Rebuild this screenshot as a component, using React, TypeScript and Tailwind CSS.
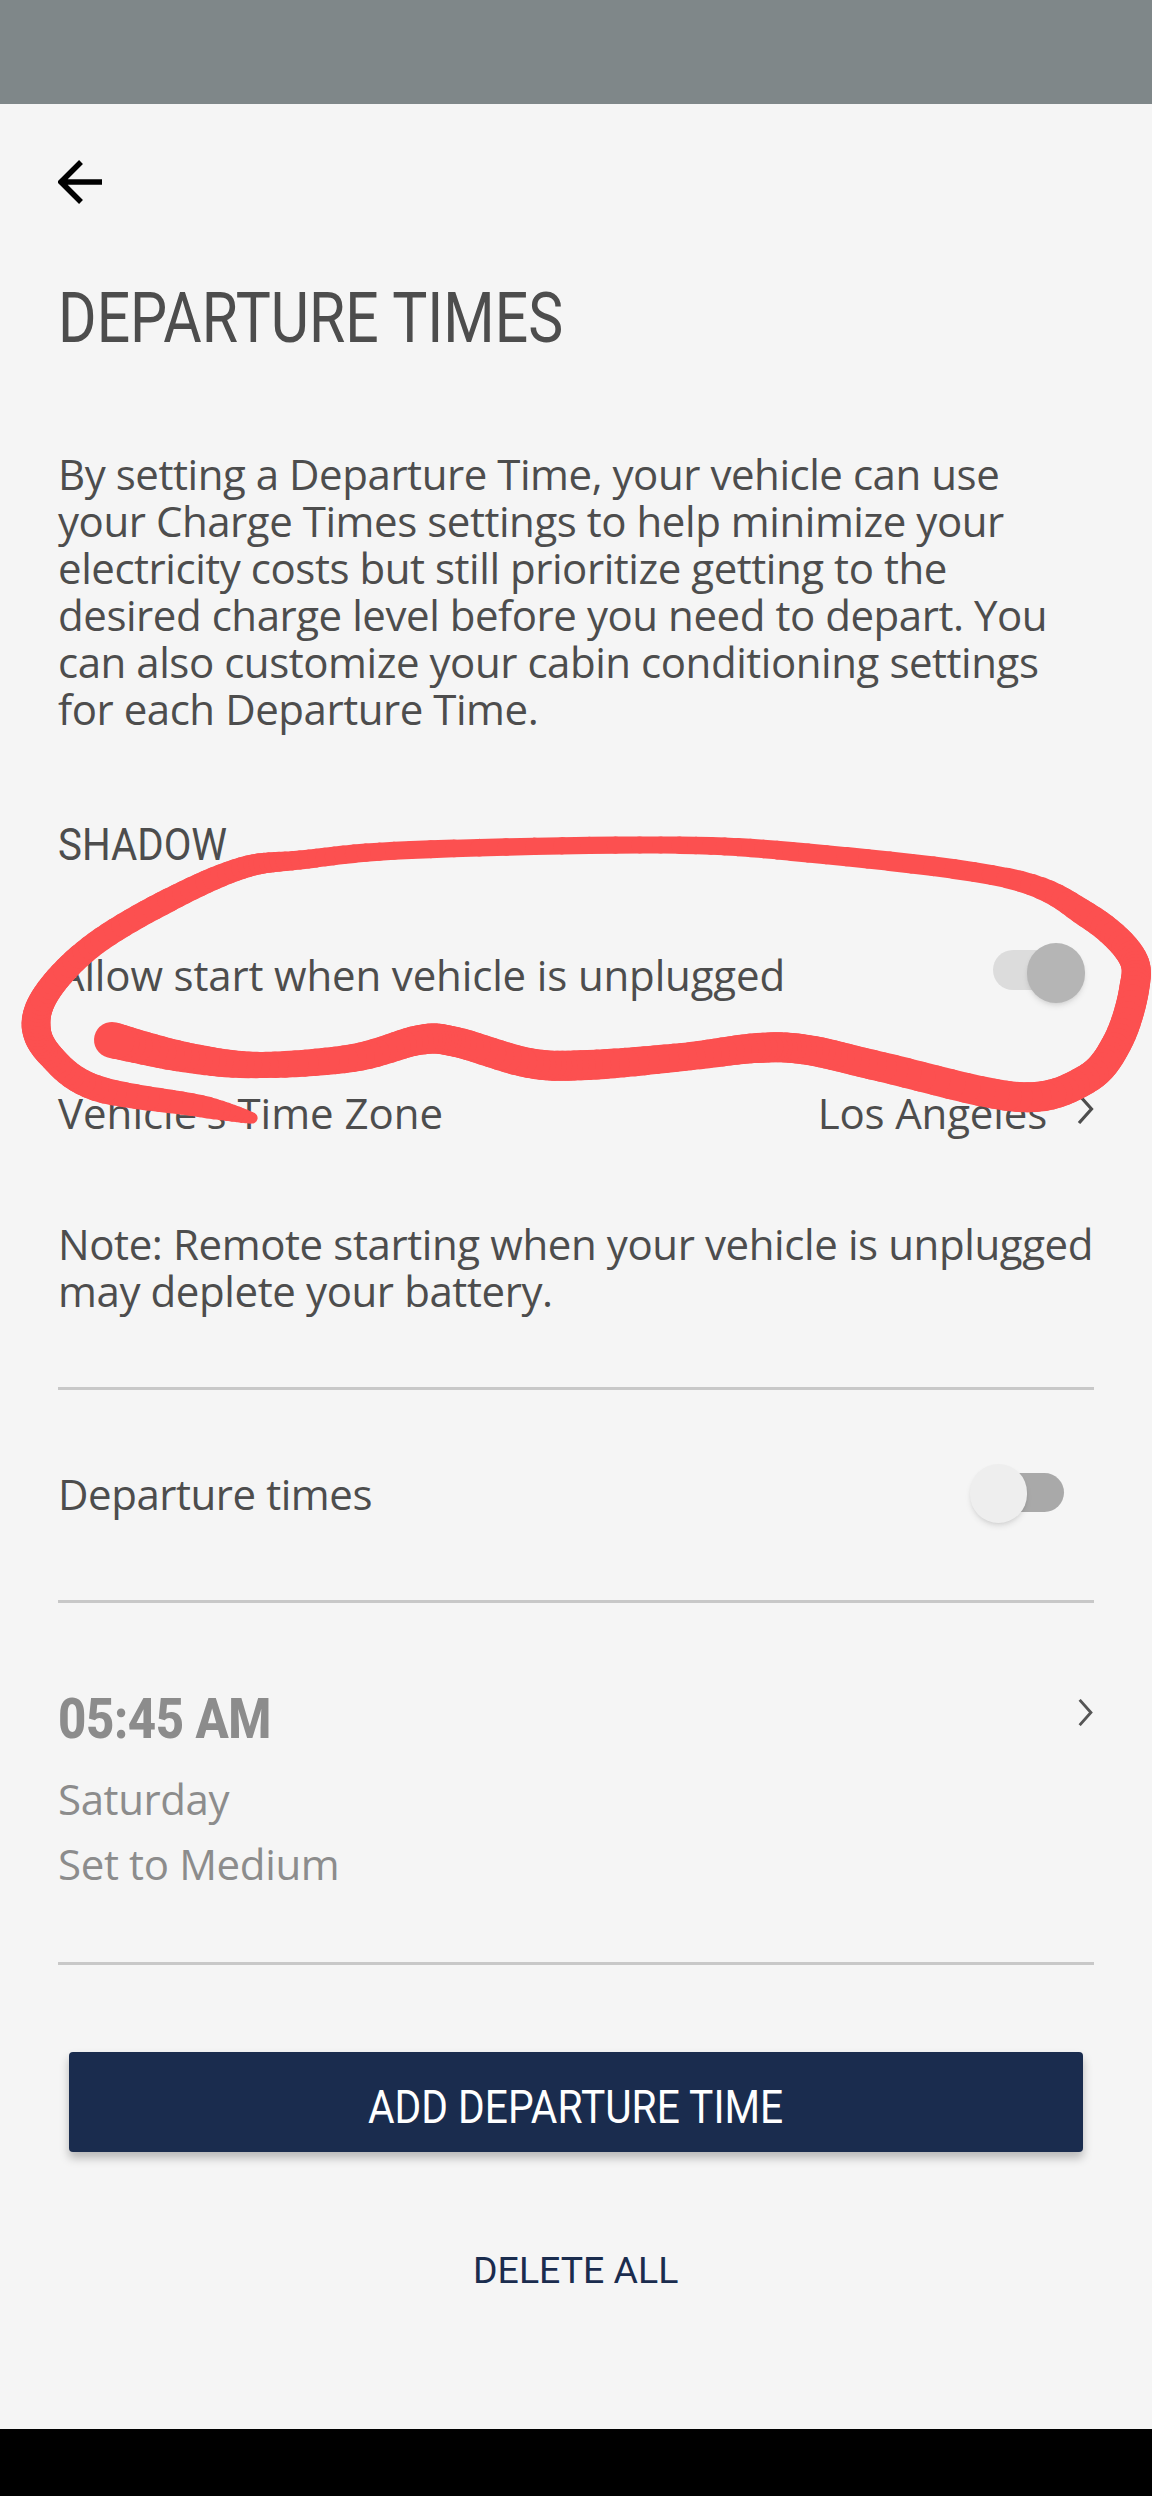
// x, y, stroke width along the marker line, from the tail under "Time Zone" round to the blob on the left
const scribble = [
  [252, 1118, 10], [200, 1106, 22], [96, 1088, 26], [50, 1055, 26], [36, 1023, 29], [51, 987, 26],
  [96, 943, 24], [169, 900, 24], [242, 868, 22], [300, 860, 19], [411, 850, 18], [661, 845, 17],
  [808, 853, 19], [1007, 878, 20], [1087, 915, 26], [1131, 955, 28], [1134, 990, 30], [1117, 1043, 30],
  [1085, 1080, 30], [1018, 1097, 30], [882, 1067, 30], [808, 1050, 30], [757, 1048, 30], [683, 1057, 28],
  [588, 1065, 30], [529, 1063, 30], [456, 1042, 30], [419, 1040, 30], [353, 1058, 28], [257, 1065, 26],
  [184, 1057, 30], [112, 1040, 36],
];

function sampleScribble() {
  const out: number[][] = [];
  for (let i = 0; i < scribble.length - 1; i++) {
    const p0 = scribble[Math.max(i - 1, 0)];
    const p1 = scribble[i];
    const p2 = scribble[i + 1];
    const p3 = scribble[Math.min(i + 2, scribble.length - 1)];
    for (let s = 0; s < 10; s++) {
      const t = s / 10;
      const cr = (k: number) =>
        0.5 * (2 * p1[k] + (p2[k] - p0[k]) * t + (2 * p0[k] - 5 * p1[k] + 4 * p2[k] - p3[k]) * t * t + (3 * p1[k] - p0[k] - 3 * p2[k] + p3[k]) * t * t * t);
      out.push([cr(0), cr(1), p1[2] + (p2[2] - p1[2]) * t]);
    }
  }
  out.push(scribble[scribble.length - 1]);
  return out;
}

function Chevron({ className }: { className: string }) {
  return (
    <svg className={className} viewBox="0 0 17 30" fill="none" stroke="currentColor" strokeWidth={3.2}>
      <path d="M2 1 L14.5 15 L2 29" />
    </svg>
  );
}

function Toggle({ on }: { on: boolean }) {
  return on ? (
    <div className="relative w-[92px] h-[62px]">
      <div className="absolute left-0 top-[7px] w-[70px] h-[40px] rounded-full bg-[#dcdcdc]" />
      <div className="absolute right-0 top-0 w-[58px] h-[60px] rounded-full bg-[#b5b5b5] shadow-md" />
    </div>
  ) : (
    <div className="relative w-[94px] h-[62px]">
      <div className="absolute right-0 top-[9px] w-[70px] h-[39px] rounded-full bg-[#a9a9a9]" />
      <div className="absolute left-0 top-0 w-[57px] h-[59px] rounded-full bg-[#eeeeee] shadow-md" />
    </div>
  );
}

export default function App() {
  const samples = sampleScribble();
  return (
    <div className="relative w-[1152px] h-[2496px] overflow-hidden flex flex-col bg-[#f5f5f5] font-['Open_Sans',sans-serif] text-[#4d4d4d]">
      <div className="h-[104px] shrink-0 bg-[#7f8789]" />

      <div className="flex-1 px-[58px]">
        <svg className="block mt-[56px] w-[44px] h-[44px] text-black" viewBox="0 0 44 44" fill="none" stroke="currentColor" strokeWidth={5.5}>
          <path d="M23 2 L3 22 L23 42 M3 22 H44" />
        </svg>

        <h1 className="mt-[74px] h-[80px] leading-[80px] text-[70px] font-['Roboto',sans-serif] font-normal whitespace-nowrap origin-left scale-x-[0.841]">
          DEPARTURE TIMES
        </h1>

        <p className="mt-[92px] text-[42px] leading-[47px] tracking-[-0.45px] whitespace-nowrap">
          By setting a Departure Time, your vehicle can use<br />
          your Charge Times settings to help minimize your<br />
          electricity costs but still prioritize getting to the<br />
          desired charge level before you need to depart. You<br />
          can also customize your cabin conditioning settings<br />
          for each Departure Time.
        </p>

        <h2 className="mt-[88px] text-[44px] leading-[50px] font-['Roboto',sans-serif] font-normal origin-left scale-x-[0.915] whitespace-nowrap">SHADOW</h2>

        <div className="mt-[73px] flex items-center justify-between h-[62px] pr-[9px]">
          <span className="text-[42px] tracking-[-0.15px]">Allow start when vehicle is unplugged</span>
          <Toggle on />
        </div>

        <div className="mt-[84px] flex items-center justify-between h-[47px]">
          <span className="text-[42px] tracking-[0px]">Vehicle's Time Zone</span>
          <div className="flex items-center">
            <span className="text-[42px] tracking-[-0.15px]">Los Angeles</span>
            <Chevron className="ml-[30px] mb-[8px] w-[17px] h-[30px]" />
          </div>
        </div>

        <p className="mt-[84px] text-[42px] leading-[47px] tracking-[-0.4px] whitespace-nowrap">
          Note: Remote starting when your vehicle is unplugged<br />
          may deplete your battery.
        </p>

        <div className="mt-[73px] h-[3px] bg-[#c8c8c8]" />

        <div className="h-[210px] flex items-center justify-between pr-[30px]">
          <span className="text-[42px] tracking-[-0.45px] mb-[3px]">Departure times</span>
          <Toggle on={false} />
        </div>

        <div className="h-[3px] bg-[#c8c8c8]" />

        <div className="relative h-[359px] pt-[91px] text-[#8c8c8c]">
          <div className="h-[50px] leading-[50px] text-[55px] font-['Roboto',sans-serif] font-extrabold tracking-[-0.5px] origin-left scale-x-[0.895] whitespace-nowrap">05:45 AM</div>
          <div className="mt-[31px] h-[47px] leading-[47px] text-[42px] tracking-[-0.4px]">Saturday</div>
          <div className="mt-[18px] h-[47px] leading-[47px] text-[42px] tracking-[-0.35px]">Set to Medium</div>
          <Chevron className="absolute right-0 top-[96px] w-[17px] h-[27px] text-[#555555]" />
        </div>

        <div className="h-[3px] bg-[#c8c8c8]" />

        <button className="block mt-[87px] mx-[11px] w-[1014px] h-[100px] pt-[10px] rounded-[4px] bg-[#1a2c4e] text-white text-center shadow-[0_6px_10px_rgba(0,0,0,0.25)]">
          <span className="inline-block text-[46px] font-['Roboto',sans-serif] whitespace-nowrap scale-x-[0.885]">ADD DEPARTURE TIME</span>
        </button>

        <div className="mt-[99px] text-center text-[#1a2c4e]">
          <span className="inline-block text-[36px] leading-[40px] font-['Roboto',sans-serif] font-normal whitespace-nowrap scale-x-[1.04]">DELETE ALL</span>
        </div>
      </div>

      <div className="h-[67px] shrink-0 bg-black" />

      {/* red marker scribble drawn over the screenshot */}
      <svg className="absolute inset-0" width="1152" height="2496" viewBox="0 0 1152 2496" fill="none" stroke="#fc5050" strokeLinecap="round">
        {samples.slice(1).map((p, i) => (
          <line key={i} x1={samples[i][0]} y1={samples[i][1]} x2={p[0]} y2={p[1]} strokeWidth={p[2]} />
        ))}
      </svg>
    </div>
  );
}
